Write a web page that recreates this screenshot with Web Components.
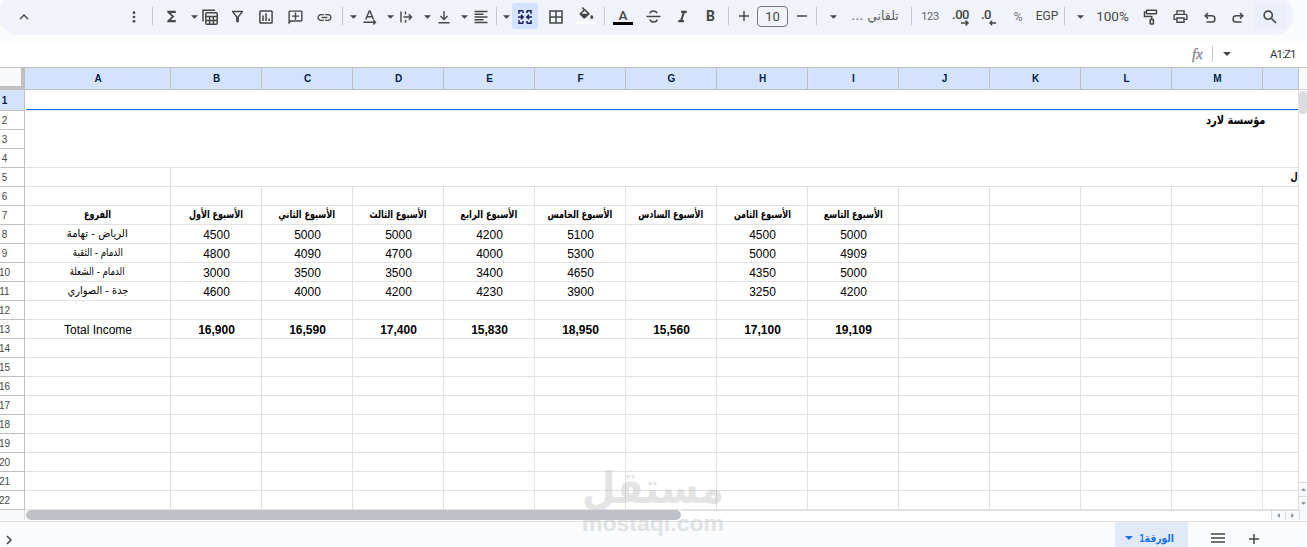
<!DOCTYPE html>
<html lang="ar">
<head>
<meta charset="utf-8">
<title>Sheet</title>
<style>
html,body{margin:0;height:100%;overflow:hidden;background:#fff}
body{font-family:"Liberation Sans",Arial,sans-serif;color:#000}
</style>
</head>
<body>
<sheet-app></sheet-app>
<script>
const ICONS = {
  up:['0 0 24 24','<path fill="currentColor" d="M12 8l-6 6 1.41 1.41L12 10.83l4.59 4.58L18 14z"/>'],
  right:['0 0 24 24','<path fill="currentColor" d="M10 6L8.59 7.41 13.17 12l-4.58 4.59L10 18l6-6z"/>'],
  more:['0 0 24 24','<g fill="currentColor"><circle cx="12" cy="5.5" r="2"/><circle cx="12" cy="12" r="2"/><circle cx="12" cy="18.5" r="2"/></g>'],
  sigma:['0 0 24 24','<path fill="currentColor" d="M18 4H6v2l6.5 6L6 18v2h12v-3h-7l5-5-5-5h7z"/>'],
  caret:['0 0 8 4','<path fill="currentColor" d="M0 0h8L4 4z"/>'],
  table:['0 0 18 18','<g fill="none" stroke="currentColor" stroke-width="1.5"><path d="M2 13.5V2.200h12"/><rect x="4.800" y="4.800" width="11.400" height="11.400" rx="1"/><path d="M5 8.500h11M5 12.400h11M8.600 8.500v8M12.400 8.500v8"/></g>'],
  filter:['0 0 24 24','<path fill="currentColor" d="M7 6h10l-5.010 6.300L7 6zm-2.750-.390C6.270 8.200 10 13 10 13v6c0 .550.450 1 1 1h2c.550 0 1-.450 1-1v-6s3.720-4.800 5.740-7.390c.510-.660.040-1.610-.790-1.610H5.040c-.830 0-1.300.950-.790 1.610z"/>'],
  chart:['0 0 16 16','<rect x="1.900" y="1.900" width="12.200" height="12.200" rx=".8" fill="none" stroke="currentColor" stroke-width="1.500"/><path fill="currentColor" d="M4.300 6.500h1.500v5.500H4.300zM7.300 4.200h1.500v7.800H7.300zM10.300 9.500h1.500v2.500h-1.500z"/>'],
  comment:['0 0 24 24','<path fill="currentColor" d="M22 4c0-1.100-.9-2-2-2H4c-1.100 0-2 .9-2 2v18l4-4h14c1.100 0 2-.9 2-2V4zm-2 12H4V4h16v12zM13 5h-2v4H7v2h4v4h2v-4h4V9h-4z"/>'],
  link:['0 0 24 24','<path fill="currentColor" d="M3.900 12c0-1.710 1.390-3.100 3.100-3.100h4V7H7c-2.760 0-5 2.240-5 5s2.240 5 5 5h4v-1.900H7c-1.710 0-3.100-1.390-3.100-3.100zM8 13h8v-2H8v2zm9-6h-4v1.900h4c1.710 0 3.100 1.390 3.100 3.100s-1.390 3.100-3.100 3.100h-4V17h4c2.760 0 5-2.240 5-5s-2.240-5-5-5z"/>'],
  rotate:['0 0 14 14','<g fill="none" stroke="currentColor" stroke-width="1.400"><path d="M2.700 9.500L6.300 1h.6l3.600 8.500M4 6.800h5.200M.5 12.300h11.500"/><path d="M10.300 10l2.200 2.300-2.200 2.100"/></g>'],
  wrap:['0 0 14 14','<g fill="none" stroke="currentColor" stroke-width="1.400"><path d="M2 1.500v11M6.500 1.500v3M6.500 9.700v3M4.500 7h8M9.800 4.200L12.500 7 9.800 9.800"/></g>'],
  bottom:['0 0 14 14','<g fill="none" stroke="currentColor" stroke-width="1.400"><path d="M7 1v8M3.500 6L7 9.400 10.500 6M1.500 12.700h11"/></g>'],
  align:['0 0 14 14','<path stroke="currentColor" stroke-width="1.300" d="M.5 1.500h13M.5 4.250h9M.5 7h13M.5 9.750h9M.5 12.500h13"/>'],
  merge:['0 0 16 16','<g fill="none" stroke="currentColor" stroke-width="1.500"><path d="M6 1.800H2v3M2 11.200v3h4M10 1.800h4v3M14 11.200v3h-4M1 8h5M15 8h-5M4 5.900L6.100 8 4 10.100M12 5.900L9.900 8l2.100 2.100M6 1.800v2.200M6 12v2.200M10 1.800v2.200M10 12v2.200"/></g>'],
  borders:['0 0 14 14','<path fill="none" stroke="currentColor" stroke-width="1.500" d="M1 1h12v12H1zM7 1v12M1 7h12"/>'],
  fill:['0 0 20 17','<path fill="currentColor" fill-rule="evenodd" d="M14 6.800L6.800 0 5.700 1.100l1.700 1.600-3.500 3.500c-.5.500-.5 1.100 0 1.600l3.600 3.400c.5.500 1.100.500 1.600 0zM5.600 6.700l3-2.900L11.600 6.700zM15.800 7.800s-1.500 1.700-1.500 2.700a1.500 1.500 0 0 0 3 0c0-1-1.500-2.700-1.500-2.700z"/><path fill="#fff" d="M0 14.500h20V17H0z"/>'],
  strike:['0 0 17 17','<g fill="none" stroke="currentColor" stroke-width="1.500"><path d="M1.500 8.500h14M11.900 5.300C11.500 3.800 10.300 3.100 8.500 3.100 6.500 3.100 5.100 4 5.100 5.500M5 11.500c.3 1.600 1.600 2.500 3.500 2.500 2.100 0 3.500-.9 3.500-2.500"/></g>'],
  italic:['0 0 24 24','<path fill="currentColor" d="M10 4v3h2.210l-3.420 10H6v3h8v-3h-2.210l3.420-10H18V4z"/>'],
  plus:['0 0 12 12','<path stroke="currentColor" stroke-width="1.500" d="M6 1v10M1 6h10"/>'],
  minus:['0 0 12 12','<path stroke="currentColor" stroke-width="1.500" d="M1 6h10"/>'],
  arrowR:['0 0 9 6','<path fill="none" stroke="currentColor" stroke-width="1.500" d="M1 3h7M5.500.500L8 3 5.500 5.500"/>'],
  arrowL:['0 0 9 6','<path fill="none" stroke="currentColor" stroke-width="1.500" d="M8 3H1M3.500.500L1 3l2.500 2.500"/>'],
  paint:['0 0 16 16','<g fill="none" stroke="currentColor" stroke-width="1.500"><rect x="3.500" y="1.200" width="10" height="3.600" rx=".6"/><path d="M3.500 3H1.500v4.500h7.300V10.300"/><rect x="7.200" y="10.500" width="3.200" height="4.500" rx=".5"/></g>'],
  print:['0 0 24 24','<path fill="currentColor" d="M19 8h-1V3H6v5H5c-1.660 0-3 1.340-3 3v6h4v4h12v-4h4v-6c0-1.660-1.340-3-3-3zM8 5h8v3H8V5zm8 12v2H8v-4h8v2zm2-2v-2H6v2H4v-4c0-.55.450-1 1-1h14c.55 0 1 .45 1 1v4h-2z"/>'],
  undo:['0 0 14 14','<path fill="none" stroke="currentColor" stroke-width="1.500" d="M5 2L2.200 4.800 5 7.600M2.400 4.800h6.400a3 3 0 0 1 0 6.200H3.500"/>'],
  redo:['0 0 14 14','<path fill="none" stroke="currentColor" stroke-width="1.500" d="M9 2l2.800 2.800L9 7.600M11.600 4.800H5.200a3 3 0 0 0 0 6.200h5.300"/>'],
  search:['0 0 14 14','<path fill="none" stroke="currentColor" stroke-width="1.600" d="M8.500 8.500L13 13M9.300 5.200a4.100 4.100 0 1 1-8.200 0 4.100 4.100 0 0 1 8.200 0z"/>'],
  menu:['0 0 14 12','<path stroke="currentColor" stroke-width="1.500" d="M0 2h14M0 6h14M0 10h14"/>']
};

class SheetIcon extends HTMLElement{
  connectedCallback(){
    const [box,body]=ICONS[this.getAttribute('name')];
    const w=this.getAttribute('w'), h=this.getAttribute('h')||w;
    this.attachShadow({mode:'open'}).innerHTML=`<style>:host{display:block;flex:none;line-height:0}svg{display:block;width:${w}px;height:${h}px;overflow:visible}</style><svg viewBox="${box}">${body}</svg>`;
  }
}
customElements.define('sheet-icon',SheetIcon);

/* One toolbar slot: fixed width, content centred */
class ToolItem extends HTMLElement{
  connectedCallback(){
    this.attachShadow({mode:'open'}).innerHTML=`<style>
    :host{display:flex;flex:none;align-items:center;justify-content:center;height:26px;white-space:nowrap;color:#444746;font-family:Roboto,sans-serif}
    :host([kind=sep]){height:18px;background:#c7c7c7}
    :host([kind=on]){background:#d3e3fd;border-radius:3px;color:#1d1d5c}
    :host([kind=search]){background:#ebeffa}
    </style><slot></slot>`;
  }
}
customElements.define('tool-item',ToolItem);

class SheetToolbar extends HTMLElement{
  connectedCallback(){
    const ic=(n,w,h,dy=0)=>`<sheet-icon name="${n}" w="${w}" h="${h||w}" style="margin-top:${dy}px"></sheet-icon>`;
    const tx=(t,s,extra='')=>`<span style="font-size:${s}px;${extra}">${t}</span>`;
    const sep=x=>[x,1,'','sep'], car=x=>[x,8,ic('caret',7,4,1)];
    /* centre, width, content, kind */
    const items=[
      [23.500,18,ic('up',18,18,1)],[133.500,16,ic('more',16,16,1)],sep(152.500),
      [171,17,ic('sigma',17,17,1)],car(194),[210,18,ic('table',18,18,1)],
      [237.500,17,ic('filter',17,17,1)],[266,16,ic('chart',16,16,1)],[295.500,17,ic('comment',17,17,2)],[324.500,17,ic('link',17,17,2)],
      sep(342.500),car(353),[370,14,ic('rotate',14,14,1)],car(390),[406,14,ic('wrap',14,14,1)],car(427.500),[444,14,ic('bottom',14,14,2)],car(464.500),[480.500,14,ic('align',14,14,1)],
      sep(496.500),car(506),[525,26,ic('merge',16,16,1),'on'],[555.500,14,ic('borders',14,14,1)],[586,20,ic('fill',20,17,-1)],sep(604.500),
      [623,20,`<span class="a">A</span>`],[653,17,ic('strike',17,17,1)],[682,17,ic('italic',17,17,1)],[710.500,12,tx('B',14,'font-weight:700')],sep(728.500),
      [744,12,ic('plus',12)],[772.500,31,`<span class="size">10</span>`],[801.500,12,ic('minus',12)],sep(816.500),car(833.500),
      [875,46,`<span class="ar" dir="rtl">تلقاني ...</span>`],sep(911.500),
      [930,20,tx('123',11,'color:#5f6265;letter-spacing:-.3px')],[960,18,`<span class="dec">.00${ic('arrowR',9,6)}</span>`],[990,18,`<span class="dec l">.0${ic('arrowL',8,6)}</span>`],
      [1018,12,tx('%',12.500,'color:#75777a')],[1047,24,tx('EGP',12)],sep(1064.500),car(1080.500),[1112.500,34,tx('100%',13.500)],
      [1151,16,ic('paint',16,16,1)],[1180.500,17,ic('print',17,17,1)],[1210,14,ic('undo',14,14,3)],[1238,14,ic('redo',14,14,3)],[1269.500,32,ic('search',14,14,1),'search']];
    let x=0,html='';
    for(const [c,w,body,kind] of items){
      const l=c-w/2;
      html+=`<tool-item kind="${kind||''}" style="width:${w}px;margin-left:${(l-x).toFixed(2)}px">${body}</tool-item>`;
      x=l+w;
    }
    this.attachShadow({mode:'open'}).innerHTML=`<style>
    :host{display:block;height:41px;background:#f9fbfd;overflow:hidden}
    .bar{display:flex;align-items:center;box-sizing:border-box;width:1295px;height:40px;margin:-5px 0 0 -1px;padding:2px 0 0 1px;border-radius:20px;background:#f0f3f9}
    .a{font-size:13.5px;font-weight:500;line-height:16px;height:18px;width:20px;text-align:center;border-bottom:3px solid #000;box-sizing:border-box}
    .size{box-sizing:border-box;width:31px;height:21px;border:1px solid #747775;border-radius:4px;font-size:13px;line-height:19px;text-align:center}
    .ar{font:12.5px/20px "DejaVu Sans",sans-serif;color:#5f6265;letter-spacing:-.1px}
    .dec{display:flex;flex-direction:column;align-items:flex-end;font-weight:500;font-size:13px;line-height:12px;height:17px;width:18px;margin-top:2px;letter-spacing:-.5px}
    .dec sheet-icon{margin-top:-1px!important}
    .dec.l{align-items:flex-start}.dec.l sheet-icon{margin-left:8px}
    </style><div class="bar">${html}</div>`;
  }
}
customElements.define('sheet-toolbar',SheetToolbar);

class FormulaBar extends HTMLElement{
  connectedCallback(){
    this.attachShadow({mode:'open'}).innerHTML=`<style>
    :host{display:flex;align-items:center;justify-content:flex-end;height:26px;box-sizing:border-box;padding:0 12px 0 0;background:#fff;color:#444746}
    .fx{font:italic 15px/16px "Liberation Serif",serif;color:#8a8d91;-webkit-text-stroke:.4px #8a8d91;margin-right:7px;width:13px;letter-spacing:-.2px}
    i{width:1px;height:16px;background:#c7c7c7;margin-right:10px}
    .n{font:11.5px Roboto,sans-serif;color:#333;margin-left:39px;width:25px;letter-spacing:-.9px;white-space:nowrap}
    </style><span class="fx">fx</span><i></i><sheet-icon name="caret" w="8" h="4"></sheet-icon><span class="n">A1:Z1</span>`;
  }
}
customElements.define('formula-bar',FormulaBar);

const W=['الأول','الثاني','الثالث','الرابع','الخامس','السادس','الثامن','التاسع'];
const DATA={
  7:['الفروع',...W.map(w=>'الأسبوع '+w)],
  8:['الرياض - تهامة',4500,5000,5000,4200,5100,'',4500,5000],
  9:['الدمام - الثقبة',4800,4090,4700,4000,5300,'',5000,4909],
  10:['الدمام - الشعلة',3000,3500,3500,3400,4650,'',4350,5000],
  11:['جدة - الصواري',4600,4000,4200,4230,3900,'',3250,4200],
  13:['Total Income','16,900','16,590','17,400','15,830','18,950','15,560','17,100','19,109']
};
class SheetGrid extends HTMLElement{
  connectedCallback(){
    let h='<div class="corner"></div>';
    for(const c of 'ABCDEFGHIJKLM')h+=`<div class="ch">${c}</div>`;
    h+='<div class="ch last"></div>';
    for(let r=1;r<=22;r++){
      h+=`<div class="rh${r==1?' on':''}"><span>${r}</span></div>`;
      if(r==1){h+='<div class="c sel"></div>';continue}
      if(r==2){h+='<div class="c title" dir="rtl"><span>مؤسسة لارد</span></div>';continue}
      if(r==3||r==4)continue;
      if(r==5){h+='<div class="c"></div><div class="c wide" dir="rtl"><span>ل</span></div>';continue}
      const d=DATA[r]||[];
      for(let i=0;i<14;i++){
        const v=d[i]??'', ar=/[\u0600-\u06ff]/.test(v);
        h+=`<div class="c${ar?' ar':''}${r==7||(r==13&&i)?' b':''}"${ar?' dir="rtl"':''}>${v===''?'':`<span>${v}</span>`}</div>`;
      }
    }
    this.attachShadow({mode:'open'}).innerHTML=`<style>
    :host{display:grid;width:1299px;height:443px;box-sizing:border-box;border-top:1px solid #c0c0c0;grid-template-columns:25px 146px repeat(12,91px) 36px;grid-template-rows:22px 21px repeat(21,19px);overflow:hidden;font-size:12px}
    div{box-sizing:border-box;min-width:0}
    .corner{background:#f8f9fa;border:solid #c0c0c0;border-width:0 4px 4px 0}
    .ch{background:#d3e3fd;border:solid #c0c0c0;border-width:0 1px 1px 0;font-weight:700;font-size:10px;line-height:21px;padding-left:1px;text-align:center;color:#041e49}
    .rh{grid-column:1;border:solid #c0c0c0;border-width:0 1px 1px 0;font-size:10px;line-height:19px;color:#444746;display:flex;overflow:hidden}
    .rh span{flex:none;width:20px;margin-left:-5.500px;text-align:center}
    .rh.on{background:#d3e3fd;font-weight:700;line-height:21px;color:#041e49}
    .c{border:solid #e1e1e1;border-width:0 1px 1px 0;line-height:20px;padding-left:1px;text-align:center;white-space:nowrap;display:flex;justify-content:center;overflow:hidden}
    .sel{grid-column:2/-1;box-shadow:inset 0 -1px #1a73e8;margin-left:1px}
    .title{grid-column:2/-1;grid-row:3/6;justify-content:flex-start;padding-right:33px;font:700 12px/19px "DejaVu Sans",sans-serif}
    .title span{display:block;transform:scaleX(.82);transform-origin:right}
    .wide{grid-column:3/-1;justify-content:flex-start;font:700 11px/18px "DejaVu Sans",sans-serif}
    .wide span{display:block;transform:scaleX(.75);transform-origin:right}
    .b{font-weight:700}
    .ar{font-family:"DejaVu Sans",sans-serif;font-size:11px;line-height:17px;padding-left:0}
    </style>${h}`;
    const want=[27,54,57,57,57,65,65,57,59,61,50,55,61];
    this.shadowRoot.querySelectorAll('.ar span').forEach((s,i)=>{
      const w=s.getBoundingClientRect().width;
      s.style.display='block';s.style.transform=`scaleX(${want[i]/w})`;
    });
  }
}
customElements.define('sheet-grid',SheetGrid);

class VScroll extends HTMLElement{
  connectedCallback(){
    this.attachShadow({mode:'open'}).innerHTML=`<style>
    :host{display:flex;flex-direction:column;width:8px;height:443px;box-sizing:border-box;border-top:1px solid #c0c0c0}
    .t{height:22px;background:#f8f9fa;border-bottom:1px solid #d5d5d5;box-sizing:border-box}
    .th{width:8px;height:23px;margin-top:1px;border-radius:4px;background:#dadce0}
    .g{flex:1}
    .b{height:14px;box-sizing:border-box;border-top:1px solid #d9d9d9;background:#f8f9fa;display:flex;align-items:center;justify-content:center;color:#80868b}
    .u sheet-icon{transform:rotate(180deg)}
    </style><div class="t"></div><div class="th"></div><div class="g"></div><div class="b u"><sheet-icon name="caret" w="5" h="3"></sheet-icon></div><div class="b d"><sheet-icon name="caret" w="5" h="3"></sheet-icon></div>`;
  }
}
customElements.define('v-scroll',VScroll);

class HScroll extends HTMLElement{
  connectedCallback(){
    this.attachShadow({mode:'open'}).innerHTML=`<style>
    :host{display:flex;height:12px;box-sizing:border-box;border-bottom:1px solid #e1e1e1}
    .l{width:25px;height:10px;background:#f8f9fa;border-right:1px solid #dadce0;box-sizing:border-box}
    .t{position:relative;z-index:2;margin-left:1px;width:655px;height:10px;border-radius:5px;background:#bdc1c6}
    .g{flex:1;border-top:1px solid #e1e1e1}
    .b{width:14px;height:10px;border:solid #dadce0;border-width:1px 0 0 1px;box-sizing:border-box;background:#f8f9fa;display:flex;align-items:center;justify-content:center;color:#80868b}
    .p sheet-icon{transform:rotate(90deg)}.n sheet-icon{transform:rotate(-90deg)}
    .e{width:8px;border-left:1px solid #dadce0;background:#f8f9fa;height:10px;box-sizing:border-box}
    </style><div class="l"></div><div class="t"></div><div class="g"></div><div class="b p"><sheet-icon name="caret" w="5" h="3"></sheet-icon></div><div class="b n"><sheet-icon name="caret" w="5" h="3"></sheet-icon></div><div class="e"></div>`;
  }
}
customElements.define('h-scroll',HScroll);

class SheetTabs extends HTMLElement{
  connectedCallback(){
    this.attachShadow({mode:'open'}).innerHTML=`<style>
    :host{display:flex;align-items:flex-start;height:25px;background:#f9fbfd;color:#444746}
    .r{margin:9px 0 0 0}
    .tab{display:flex;align-items:center;box-sizing:border-box;margin-left:auto;width:73px;height:25px;background:#e1e9f7;color:#1a73e8;padding:7px 0 0 10px}
    .tab span{display:block;font:700 11px/16px "Liberation Sans","DejaVu Sans",sans-serif;margin-left:7px;width:34px;white-space:nowrap;transform:scaleX(.84);transform-origin:right}
    .m{margin:10px 0 0 23px}.p{margin:11px 47px 0 23px}
    </style><sheet-icon class="r" name="right" w="18"></sheet-icon><div class="tab"><sheet-icon name="caret" w="8" h="4"></sheet-icon><span dir="rtl">الورقة1</span></div><sheet-icon class="m" name="menu" w="14" h="12"></sheet-icon><sheet-icon class="p" name="plus" w="12"></sheet-icon>`;
  }
}
customElements.define('sheet-tabs',SheetTabs);

class WaterMark extends HTMLElement{
  connectedCallback(){
    this.attachShadow({mode:'open'}).innerHTML=`<style>
    :host{position:absolute;z-index:1;left:581px;top:464px;width:144px;height:76px;color:#c4c4c4;opacity:.45;pointer-events:none}
    svg{display:block;overflow:visible}
    </style><svg width="144" height="76"><text x="72" y="39" text-anchor="middle" direction="rtl" font-family="DejaVu Sans" font-weight="700" font-size="44" fill="currentColor" textLength="142" lengthAdjust="spacingAndGlyphs">مستقل</text><text x="1" y="67" font-family="Liberation Sans" font-weight="700" font-size="22" fill="currentColor" textLength="142" lengthAdjust="spacingAndGlyphs">mostaql.com</text></svg>`;
  }
}
customElements.define('water-mark',WaterMark);

class SheetApp extends HTMLElement{
  connectedCallback(){
    this.attachShadow({mode:'open'}).innerHTML=`<style>
    :host{display:flex;flex-direction:column;position:relative;width:1307px;height:547px;overflow:hidden;background:#fff}
    .m{display:flex}
    </style><sheet-toolbar></sheet-toolbar><formula-bar></formula-bar><div class="m"><sheet-grid></sheet-grid><v-scroll></v-scroll></div><h-scroll></h-scroll><sheet-tabs></sheet-tabs><water-mark></water-mark>`;
  }
}
customElements.define('sheet-app',SheetApp);
</script>
</body>
</html>
